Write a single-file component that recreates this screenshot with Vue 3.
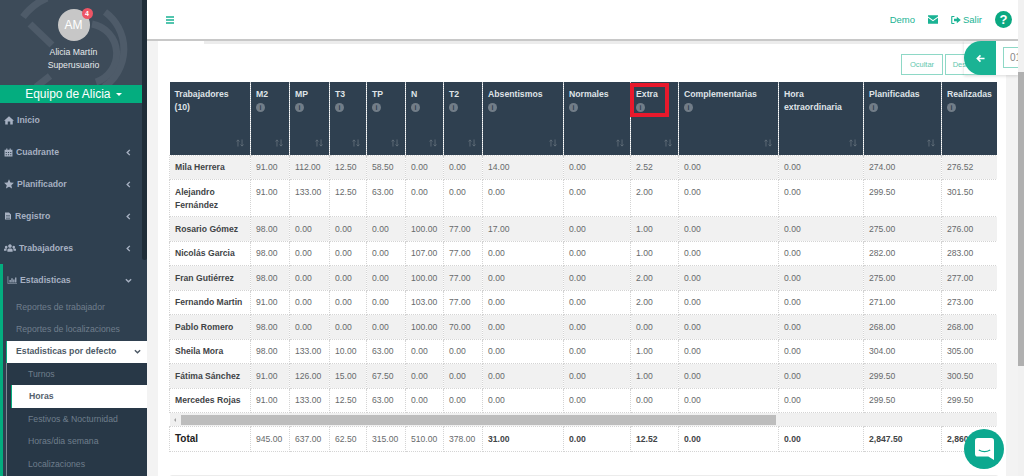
<template>
  <div class="page">
    <aside class="sidebar">
      <div class="profile">
        <svg class="ring" viewBox="0 0 147 85" aria-hidden="true">
          <path d="M23 17 A60 60 0 0 1 47 -2" />
          <path d="M30 24 L52 45" />
          <path d="M105 12 A46 46 0 0 1 104 87" />
          <path d="M92 24 A30 30 0 0 1 96 82" />
          <path d="M36 87 L50 76" />
        </svg>
        <div class="avatar">AM<span class="badge">4</span></div>
        <div class="who">Alicia Martín</div>
        <div class="who">Superusuario</div>
      </div>
      <div class="team">Equipo de Alicia <i class="caret"></i></div>
      <nav class="menu">
        <div v-for="item in menu" :key="item.label" class="menu-item" :class="{ open: item.open }">
          <svg class="menu-icon" viewBox="0 0 16 16" :style="{ width: item.size + 'px', height: item.size + 'px' }"><path :d="item.icon" /></svg>
          <span class="menu-label">{{ item.label }}</span>
          <svg v-if="item.arrow" class="chev" viewBox="0 0 8 8"><path :d="item.open ? 'M1 2.5 L4 5.5 L7 2.5' : 'M5.5 1 L2.5 4 L5.5 7'" /></svg>
        </div>
        <div class="open-group">
          <div class="sub">Reportes de trabajador</div>
          <div class="sub">Reportes de localizaciones</div>
          <div class="sub active">
            <span>Estadisticas por defecto</span>
            <svg class="chev dark" viewBox="0 0 8 8"><path d="M1 2.5 L4 5.5 L7 2.5" /></svg>
          </div>
          <div class="subsub">
            <div v-for="s in subItems" :key="s" class="sub2" :class="{ current: s === 'Horas' }">{{ s }}</div>
          </div>
        </div>
      </nav>
      <div class="side-thumb"></div>
    </aside>

    <main class="main">
      <header class="topbar">
        <svg class="burger" viewBox="0 0 8 8"><path d="M0 1 H8 M0 4 H8 M0 7 H8" /></svg>
        <div class="top-right">
          <span>Demo</span>
          <svg class="mail" viewBox="0 0 12 10"><path d="M0 0 H12 V1.5 L6 5.5 L0 1.5 Z M0 3 L6 7 L12 3 V10 H0 Z" /></svg>
          <span class="salir">
            <svg class="exit" viewBox="0 0 12 10"><path d="M4 0 H1 Q0 0 0 1 V9 Q0 10 1 10 H4 V8.6 H1.4 V1.4 H4 Z M7 1 L12 5 L7 9 V6.5 H3.5 V3.5 H7 Z" /></svg>
            Salir
          </span>
          <span class="help">?</span>
        </div>
      </header>

      <section class="content">
        <div class="tabs-edge"></div>
        <div class="actions">
          <button class="btn">Ocultar</button>
          <button class="btn">Descargar</button>
        </div>

        <div class="float-panel">
          <div class="float-tab">
            <svg viewBox="0 0 10 10"><path d="M1.5 5 H9.5 M5 1.5 L1.5 5 L5 8.5" /></svg>
          </div>
          <div class="float-body"><span class="date">01</span></div>
        </div>

        <div class="table-wrap">
          <table class="grid">
            <colgroup>
              <col v-for="c in columns" :key="c.name" :style="{ width: c.width + 'px' }" />
            </colgroup>
            <thead>
              <tr>
                <th v-for="c in columns" :key="c.name">
                  <div class="th-title">{{ c.name }}</div>
                  <span v-if="c.info" class="info">i</span>
                  <svg v-if="c.name !== 'Realizadas'" class="sort" viewBox="0 0 9 9"><path d="M2.2 8.5 V1 M0.5 2.8 L2.2 1 L3.9 2.8 M6.8 0.5 V8 M5.1 6.2 L6.8 8 L8.5 6.2" /></svg>
                  <span v-if="c.name === 'Extra'" class="highlight"></span>
                </th>
              </tr>
            </thead>
            <tbody>
              <tr v-for="(r, i) in rows" :key="r[0]" :class="{ odd: i % 2 === 0, tall: i === 1 }">
                <td v-for="(v, j) in r" :key="j" :class="{ name: j === 0 }">{{ v }}</td>
              </tr>
              <tr class="bar-row">
                <td :colspan="columns.length">
                  <div class="hscroll">
                    <i class="tri left"></i>
                    <div class="hthumb"></div>
                    <i class="tri right"></i>
                  </div>
                </td>
              </tr>
              <tr class="total">
                <td class="name big">Total</td>
                <td v-for="(v, j) in totals" :key="j" :class="{ strong: j > 5 }">{{ v }}</td>
              </tr>
            </tbody>
          </table>
        </div>
        <div class="next-card"></div>
      </section>
      <div class="page-scroll"><div class="page-thumb"></div></div>
    </main>

    <div class="chat">
      <svg viewBox="0 0 20 23"><path d="M3 0 H17 Q20 0 20 3 V23 L14 19.5 H3 Q0 19.5 0 16.5 V3 Q0 0 3 0 Z" fill="#fff" /><path d="M4 12.5 Q10 16 16 12.5" fill="none" stroke="#0ca88f" stroke-width="1.2" /></svg>
    </div>
  </div>
</template>

<script setup>
const menu = [
  { label: 'Inicio', size: 10, icon: 'M8 2 L16 9 L14 9 V15 H10 V10.5 H6 V15 H2 V9 H0 Z' },
  { label: 'Cuadrante', size: 9, arrow: true, icon: 'M1 3 H4 V1 H6 V3 H10 V1 H12 V3 H15 V15 H1 Z M3 7 V9 H5 V7 Z M7 7 V9 H9 V7 Z M11 7 V9 H13 V7 Z M3 11 V13 H5 V11 Z M7 11 V13 H9 V11 Z M11 11 V13 H13 V11 Z' },
  { label: 'Planificador', size: 10, arrow: true, icon: 'M8 0.5 L10.3 5.5 L15.8 6.1 L11.7 9.8 L12.9 15.2 L8 12.4 L3.1 15.2 L4.3 9.8 L0.2 6.1 L5.7 5.5 Z' },
  { label: 'Registro', size: 8, arrow: true, icon: 'M2 1 H10 L14 5 V15 H2 Z M4 7 V8 H12 V7 Z M4 9.5 V10.5 H12 V9.5 Z M4 12 V13 H12 V12 Z' },
  { label: 'Trabajadores', size: 12, arrow: true, icon: 'M8 3 A2.4 2.4 0 1 1 7.9 3 Z M3 5 A1.8 1.8 0 1 1 2.9 5 Z M13 5 A1.8 1.8 0 1 1 12.9 5 Z M4.5 13 V10.5 Q4.5 8.5 6.5 8.5 H9.5 Q11.5 8.5 11.5 10.5 V13 Z M0 11.5 V10 Q0 8.5 1.5 8.5 H3.8 Q3.3 9.5 3.3 11.5 Z M16 11.5 V10 Q16 8.5 14.5 8.5 H12.2 Q12.7 9.5 12.7 11.5 Z' },
  { label: 'Estadisticas', size: 10, arrow: true, open: true, icon: 'M1 2 H2 V13 H16 V14 H1 Z M4 8 H6 V12 H4 Z M7 5 H9 V12 H7 Z M10 7 H12 V12 H10 Z M13 4 H15 V12 H13 Z' }
]

const subItems = ['Turnos', 'Horas', 'Festivos & Nocturnidad', 'Horas/dia semana', 'Localizaciones']

const columns = [
  { name: 'Trabajadores (10)', width: 81 },
  { name: 'M2', width: 39, info: true },
  { name: 'MP', width: 40, info: true },
  { name: 'T3', width: 37, info: true },
  { name: 'TP', width: 39, info: true },
  { name: 'N', width: 38, info: true },
  { name: 'T2', width: 39, info: true },
  { name: 'Absentismos', width: 81, info: true },
  { name: 'Normales', width: 67, info: true },
  { name: 'Extra', width: 48, info: true },
  { name: 'Complementarias', width: 100, info: true },
  { name: 'Hora extraordinaria', width: 85 },
  { name: 'Planificadas', width: 78, info: true },
  { name: 'Realizadas', width: 70, info: true }
]

const rows = [
  ['Mila Herrera', '91.00', '112.00', '12.50', '58.50', '0.00', '0.00', '14.00', '0.00', '2.52', '0.00', '0.00', '274.00', '276.52'],
  ['Alejandro Fernández', '91.00', '133.00', '12.50', '63.00', '0.00', '0.00', '0.00', '0.00', '2.00', '0.00', '0.00', '299.50', '301.50'],
  ['Rosario Gómez', '98.00', '0.00', '0.00', '0.00', '100.00', '77.00', '17.00', '0.00', '1.00', '0.00', '0.00', '275.00', '276.00'],
  ['Nicolás Garcia', '98.00', '0.00', '0.00', '0.00', '107.00', '77.00', '0.00', '0.00', '1.00', '0.00', '0.00', '282.00', '283.00'],
  ['Fran Gutiérrez', '98.00', '0.00', '0.00', '0.00', '100.00', '77.00', '0.00', '0.00', '2.00', '0.00', '0.00', '275.00', '277.00'],
  ['Fernando Martin', '91.00', '0.00', '0.00', '0.00', '103.00', '77.00', '0.00', '0.00', '2.00', '0.00', '0.00', '271.00', '273.00'],
  ['Pablo Romero', '98.00', '0.00', '0.00', '0.00', '100.00', '70.00', '0.00', '0.00', '0.00', '0.00', '0.00', '268.00', '268.00'],
  ['Sheila Mora', '98.00', '133.00', '10.00', '63.00', '0.00', '0.00', '0.00', '0.00', '1.00', '0.00', '0.00', '304.00', '305.00'],
  ['Fátima Sánchez', '91.00', '126.00', '15.00', '67.50', '0.00', '0.00', '0.00', '0.00', '1.00', '0.00', '0.00', '299.50', '300.50'],
  ['Mercedes Rojas', '91.00', '133.00', '12.50', '63.00', '0.00', '0.00', '0.00', '0.00', '0.00', '0.00', '0.00', '299.50', '299.50']
]

const totals = ['945.00', '637.00', '62.50', '315.00', '510.00', '378.00', '31.00', '0.00', '12.52', '0.00', '0.00', '2,847.50', '2,860.02']
</script>

<style>
html, body {
  margin: 0;
  overflow: hidden;
}
</style>

<style scoped>
.page {
  display: flex;
  width: 1024px;
  height: 476px;
  overflow: hidden;
  position: relative;
  font-family: "Liberation Sans", Arial, sans-serif;
  background: #f3f3f3;
}

.sidebar {
  width: 147px;
  flex: none;
  background: #2f4050;
  position: relative;
  overflow: hidden;
}
.profile {
  height: 85px;
  background: #3d4b59;
  position: relative;
  display: flex;
  flex-direction: column;
  align-items: center;
  color: #e6e9ec;
  font-size: 8.7px;
}
.ring {
  position: absolute;
  inset: 0;
  width: 147px;
  height: 85px;
}
.ring path {
  fill: none;
  stroke: #4e5b69;
  stroke-width: 7;
}
.avatar {
  position: relative;
  width: 32px;
  height: 32px;
  margin-top: 9px;
  margin-bottom: 5px;
  border-radius: 50%;
  background: #c7c7c7;
  color: #fff;
  font-size: 12px;
  line-height: 32px;
  text-align: center;
}
.badge {
  position: absolute;
  top: -1px;
  right: -3px;
  width: 11px;
  height: 11px;
  border-radius: 50%;
  background: #ed5565;
  font-size: 7px;
  font-weight: bold;
  line-height: 11px;
}
.who {
  position: relative;
  line-height: 13px;
}
.team {
  height: 18px;
  background: #04ad7f;
  color: #fff;
  font-size: 12px;
  line-height: 18px;
  text-align: center;
}
.caret {
  display: inline-block;
  border: 3px solid transparent;
  border-top-color: #fff;
  border-bottom: 0;
  vertical-align: 2px;
  margin-left: 2px;
}

.menu {
  padding-top: 1px;
}
.menu-item {
  height: 32px;
  display: flex;
  align-items: center;
  padding: 0 15px 0 4px;
  color: #a7b1c2;
  font-size: 8.7px;
  font-weight: bold;
  gap: 3px;
}
.menu-icon {
  fill: #a7b1c2;
  flex: none;
}
.menu-label {
  flex: 1;
}
.chev {
  width: 7px;
  height: 7px;
  fill: none;
  stroke: #a7b1c2;
  stroke-width: 1.6;
  flex: none;
}
.chev.dark {
  stroke: #4b5763;
}
.menu-item.open {
  border-left: 3px solid #04ad7f;
  padding-left: 4px;
}
.open-group {
  border-left: 3px solid #04ad7f;
}
.sub {
  height: 22.3px;
  padding-left: 13px;
  font-size: 8.7px;
  line-height: 22.3px;
  color: #6f7e8c;
}
.sub.active {
  margin-left: 3px;
  padding-left: 9px;
  padding-right: 6px;
  height: 22px;
  display: flex;
  align-items: center;
  justify-content: space-between;
  background: #fff;
  color: #4d5a66;
  font-weight: bold;
  border-left: 1px solid #04ad7f;
}
.subsub {
  margin-left: 3px;
  background: #283847;
  border-left: 1px solid #7e8a94;
  height: 120px;
}
.sub2 {
  height: 22.5px;
  padding-left: 21px;
  font-size: 8.7px;
  line-height: 22.5px;
  color: #6f7e8c;
}
.sub2.current {
  margin-left: 4px;
  padding-left: 17px;
  background: #fff;
  color: #55616d;
  font-weight: bold;
  border-left: 1px solid #04ad7f;
}
.side-thumb {
  position: absolute;
  top: 0;
  right: 0;
  width: 5px;
  height: 260px;
  background: #1f2d38;
  border-radius: 0 0 3px 3px;
}

.main {
  flex: 1;
  position: relative;
  min-width: 0;
  display: flex;
  flex-direction: column;
}
.topbar {
  height: 39px;
  flex: none;
  background: #fff;
  border-bottom: 2px solid #c8c8c8;
  display: flex;
  align-items: center;
  padding: 0 12px 0 19px;
}
.burger {
  width: 8px;
  height: 8px;
  stroke: #1ab394;
  stroke-width: 1.3;
  fill: none;
}
.top-right {
  margin-left: auto;
  display: flex;
  align-items: center;
  color: #1ab394;
  font-size: 9.5px;
}
.mail {
  width: 10px;
  height: 9px;
  fill: #1ab394;
  margin-left: 13px;
  margin-right: 13px;
}
.salir {
  display: flex;
  align-items: center;
  gap: 2px;
}
.exit {
  width: 10px;
  height: 8px;
  fill: #1ab394;
}
.help {
  width: 17px;
  height: 17px;
  margin-left: 13px;
  border-radius: 50%;
  background: #0aa881;
  color: #fff;
  font-size: 13px;
  font-weight: bold;
  line-height: 17px;
  text-align: center;
}

.content {
  position: relative;
  flex: 1;
  margin: 0 18px 0 11px;
  background: #fff;
  padding: 0 0 0 11px;
  overflow: visible;
}
.tabs-edge {
  height: 3px;
  margin: 0 0 10px 35px;
  background: #ececec;
}
.actions {
  height: 28px;
  padding-right: 11px;
  display: flex;
  justify-content: flex-end;
  gap: 2px;
}
.btn {
  width: 42px;
  height: 21px;
  padding: 0;
  box-sizing: border-box;
  background: #fff;
  border: 1px solid #8ed8c6;
  color: #5fc7ae;
  font-family: inherit;
  font-size: 7.5px;
}
.btn + .btn {
  width: 50px;
}
.float-panel {
  position: absolute;
  top: 0;
  right: -12px;
  height: 34px;
  display: flex;
  box-shadow: 0 1px 3px rgba(0, 0, 0, 0.15);
}
.float-tab {
  width: 32px;
  background: #1ab394;
  border-radius: 17px 0 0 17px;
  display: flex;
  align-items: center;
  justify-content: center;
}
.float-tab svg {
  width: 9px;
  height: 9px;
  fill: none;
  stroke: #fff;
  stroke-width: 1.8;
}
.float-body {
  width: 22px;
  background: #fff;
  padding: 6px 0 0 7px;
  box-sizing: border-box;
  overflow: hidden;
}
.date {
  display: block;
  width: 30px;
  height: 21px;
  box-sizing: border-box;
  border: 1px solid #8ed8c6;
  font-size: 10px;
  line-height: 19px;
  padding-left: 6px;
  color: #888;
}

.table-wrap {
  width: 828px;
  overflow: hidden;
}
.grid {
  table-layout: fixed;
  border-collapse: collapse;
  width: 828px;
  font-size: 8.6px;
  color: #676a6c;
}
th {
  height: 73px;
  padding: 0;
  background: #2f4050;
  color: #dfe3e7;
  font-weight: bold;
  font-size: 8.7px;
  text-align: left;
  vertical-align: top;
  position: relative;
  border-left: 1px dotted #c9ced2;
  box-sizing: border-box;
}
th:first-child {
  border-left: 0;
}
.th-title {
  padding: 6px 6px 0 5px;
  line-height: 12.5px;
}
.info {
  display: block;
  width: 9px;
  height: 9px;
  margin: 2px 0 0 5px;
  border-radius: 50%;
  background: #727d88;
  color: #2f4050;
  font-size: 7px;
  line-height: 9px;
  text-align: center;
}
.highlight {
  position: absolute;
  top: 1px;
  left: -1px;
  width: 39px;
  height: 34px;
  box-sizing: border-box;
  border: 4px solid #e8192c;
}
.sort {
  position: absolute;
  right: 6px;
  bottom: 8px;
  width: 8px;
  height: 8px;
  fill: none;
  stroke: #66727e;
  stroke-width: 0.9;
}
td {
  padding: 0 5px;
  height: 24.5px;
  box-sizing: border-box;
  border: 1px dotted #d4d4d4;
  line-height: 12.5px;
  overflow: hidden;
  white-space: nowrap;
}
tr.odd td {
  background: #f1f1f1;
}
tr.tall td {
  height: 37px;
  padding-top: 6px;
  vertical-align: top;
  white-space: normal;
}
td.name {
  color: #3f4446;
  font-weight: bold;
}
td.name.big {
  font-size: 10px;
  color: #222;
}
tr.total td {
  height: 24.6px;
}
td.strong {
  font-weight: bold;
  color: #3f4446;
}
tr.bar-row td {
  height: 13px;
  padding: 0;
  border: 0;
}
.hscroll {
  height: 13px;
  background: #f0f0f0;
  display: flex;
  align-items: center;
}
.hthumb {
  width: 595px;
  height: 10px;
  margin-left: 5px;
  background: #bdbdbd;
}
.tri {
  border: 2.5px solid transparent;
  flex: none;
}
.tri.left {
  border-right-color: #a0a0a0;
  border-left: 0;
  margin-left: 4px;
}
.tri.right {
  border-left-color: #505050;
  border-right: 0;
  margin-left: auto;
  margin-right: 4px;
}
.next-card {
  height: 20px;
  margin-top: 23px;
  width: 828px;
  border: 1px solid #ececec;
  border-radius: 3px;
}

.page-scroll {
  position: absolute;
  top: 0;
  right: 0;
  bottom: 0;
  width: 6px;
  background: #f1f1f1;
}
.page-thumb {
  margin-top: 72px;
  height: 294px;
  background: #b0b0b0;
}
.chat {
  position: absolute;
  left: 964px;
  top: 429px;
  width: 40px;
  height: 40px;
  border-radius: 50%;
  background: #0ca88f;
  display: flex;
  align-items: center;
  justify-content: center;
}
.chat svg {
  width: 19px;
  height: 22px;
}
</style>
